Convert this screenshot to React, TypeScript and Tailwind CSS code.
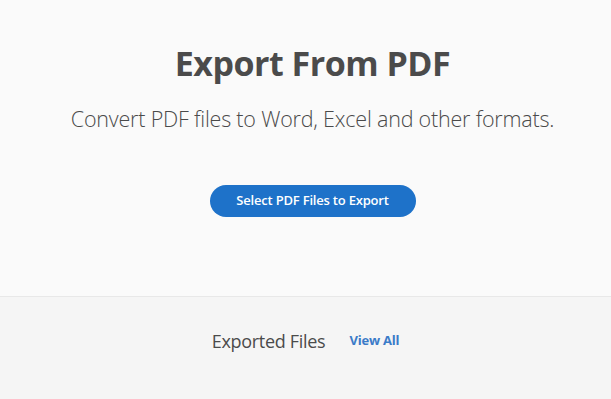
export default function App() {
  return (
    <div className="min-h-[399px] bg-[#f5f5f5] font-['Open_Sans',sans-serif]">
      <section className="flex h-[297px] flex-col items-center border-b border-[#e8e8e8] bg-[#fafafa] pl-[14px] pt-[40px]">
        <h1 className="text-[34px] leading-[46px] font-bold text-[#4b4b4b] tracking-[-0.5px]">
          Export From PDF
        </h1>
        <p className="mt-[18px] text-[21.5px] leading-[30px] font-light text-[#4a4a4a] tracking-[-0.2px]">
          Convert PDF files to Word, Excel and other formats.
        </p>
        <button className="mt-[51px] h-[32px] w-[206px] rounded-full bg-[#1e72c9] text-[13px] font-semibold text-white tracking-[-0.2px]">
          Select PDF Files to Export
        </button>
      </section>
      <section className="flex items-center justify-center gap-[24px] pt-[31px]">
        <span className="text-[18px] leading-[26px] text-[#4b4b4b] tracking-[-0.3px]">Exported Files</span>
        <span className="text-[13px] font-bold text-[#3b7bc8] tracking-[-0.2px]">View All</span>
      </section>
    </div>
  );
}
